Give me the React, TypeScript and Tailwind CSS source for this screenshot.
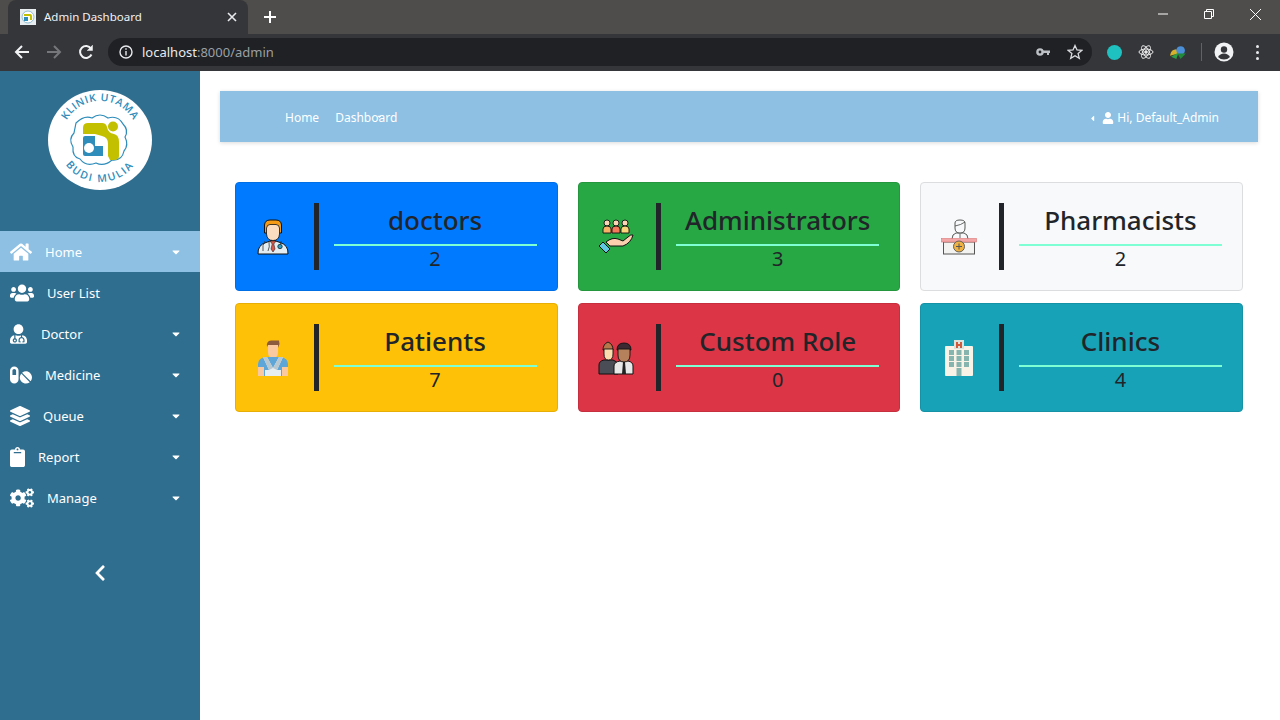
import { FaHome, FaUsers, FaUserMd, FaPills, FaLayerGroup, FaClipboard, FaCogs, FaChevronLeft, FaUser, FaCaretDown, FaCaretLeft } from "react-icons/fa";
import type { ReactNode } from "react";

const FONT = "font-['Noto_Sans','Open_Sans',sans-serif]";

// Sidebar logo, text stays real text on a curve
const Logo = () => (
  <svg width="104" height="100" viewBox="0 0 104 100">
    <ellipse cx="52" cy="50" rx="52" ry="50" fill="#ffffff" />
    <defs>
      <path id="logoTop" d="M 14 48 A 38 37 0 0 1 90 48" />
      <path id="logoBottom" d="M 12 56 A 40 36 0 0 0 92 56" />
    </defs>
    <text fontSize="10.5" fontWeight="600" fill="#2e8dbb" letterSpacing="0.6" fontFamily="Open Sans">
      <textPath href="#logoTop" startOffset="50%" textAnchor="middle">KLINIK UTAMA</textPath>
    </text>
    <text fontSize="10.5" fontWeight="600" fill="#2e8dbb" letterSpacing="1.8" fontFamily="Open Sans">
      <textPath href="#logoBottom" startOffset="50%" textAnchor="middle">BUDI MULIA</textPath>
    </text>
    <path d="M28 33 Q36 25 44 28 Q52 22 60 28 Q70 25 75 34 Q81 40 77 47 Q81 55 76 61 Q74 71 64 70 Q56 77 48 73 Q38 77 32 69 Q24 67 25 57 Q20 49 26 43 Z" fill="#ffffff" stroke="#2e8dbb" strokeWidth="1.2" />
    <path d="M35 38 Q35 33 40 33 H54 Q58 33 59 37 Q60 43 66 44 Q71 45 71 52 V66 Q71 70 66 70 H62 L60 66 V54 Q60 47 54 46 L47 44 H35 Z" fill="#c3c000" />
    <circle cx="65" cy="36.5" r="5" fill="#c3c000" />
    <path d="M35 48 Q35 46 37 46 H47 V56 H55 V66 H37 Q35 66 35 64 Z" fill="#2e8dbb" />
    <circle cx="41" cy="58" r="5" fill="#ffffff" />
  </svg>
);

const DoctorIcon = () => (
  <svg width="32" height="36" viewBox="0 0 32 36">
    <path d="M1 35 Q0.5 26 9 23.5 L16 21 L23 23.5 Q31.5 26 31 35 Z" fill="#e3edf2" stroke="#111" strokeWidth="1" />
    <path d="M13 22 H19 L16.8 25 L18 30 L16 33 L14 30 L15.2 25 Z" fill="#d9584a" stroke="#111" strokeWidth="0.5" />
    <path d="M7.5 14 V6 Q8 1 13 1 H19 Q24 1 24.5 6 V14 Z" fill="#f59a16" stroke="#111" strokeWidth="1" />
    <path d="M9.5 9 Q10 5.5 13 5.5 H19 Q22 5.5 22.5 9 V15 Q22 21.5 16 21.5 Q10 21.5 9.5 15 Z" fill="#fcdcc0" stroke="#111" strokeWidth="0.8" />
    <circle cx="23" cy="27.5" r="2.2" fill="#2f9bc0" stroke="#111" strokeWidth="0.7" />
    <path d="M8 22 Q5 26 6 32 M12 23 Q13 28 11 32 M24 22 Q25 24 23 25" stroke="#333" strokeWidth="0.8" fill="none" />
  </svg>
);

const AdminIcon = () => (
  <svg width="36" height="36" viewBox="0 0 36 36">
    {[9, 18, 27].map((x, i) => (
      <g key={x}>
        <circle cx={x} cy="4" r="3" fill="#fcd5b4" stroke="#111" strokeWidth="0.9" />
        <path d={`M${x - 4} 14 V10 Q${x - 4} 7 ${x} 7 Q${x + 4} 7 ${x + 4} 10 V14 Z`} fill={["#f7b267", "#f5785a", "#fbd67a"][i]} stroke="#111" strokeWidth="0.9" />
      </g>
    ))}
    <path d="M8 23 Q14 18 20 20 L25 22 L30 18 Q33 15 35 16 Q33 24 25 27 H12 Z" fill="#fcd0ae" stroke="#111" strokeWidth="1" />
    <path d="M5 23 L12 30 L8 34 L1 27 Z" fill="#5ec8e0" stroke="#111" strokeWidth="1" />
  </svg>
);

const PharmacistIcon = () => (
  <svg width="36" height="36" viewBox="0 0 36 36">
    <path d="M11 20 Q11 15 15 14 H23 Q27 15 27 20" fill="#f8f9fa" stroke="#444" strokeWidth="0.9" />
    <path d="M14 9 V4 Q14 1 19 1 Q24 1 24 4 V9 Q24 14 19 14 Q14 14 14 9 Z" fill="#f8f9fa" stroke="#444" strokeWidth="0.9" />
    <path d="M14 7 Q20 6 24 3" fill="none" stroke="#444" strokeWidth="0.8" />
    <path d="M19 15 V19" stroke="#444" strokeWidth="0.8" />
    <rect x="2.5" y="23" width="31" height="12" fill="#f3f3f1" stroke="#555" strokeWidth="1" />
    <rect x="0.5" y="19.5" width="35" height="3.5" fill="#f3a6a6" stroke="#d77" strokeWidth="0.6" />
    <circle cx="18" cy="27.5" r="5.5" fill="#eeb142" stroke="#555" strokeWidth="0.9" />
    <path d="M18 24.5 V30.5 M15 27.5 H21" stroke="#555" strokeWidth="1" />
  </svg>
);

const PatientIcon = () => (
  <svg width="30" height="36" viewBox="0 0 30 36">
    <path d="M9 7 Q8 1 13 0.5 H21 L21.5 4 L20 8 L18 5 H10 Z" fill="#8c5a3c" />
    <path d="M10 5 H20 V12 Q20 18 15 18 Q10 18 10 12 Z" fill="#fbc9a0" />
    <path d="M0 36 V24 Q0 18 8 17 H22 Q30 18 30 24 V36 Z" fill="#5fa6d8" />
    <path d="M0 27 H6 V36 H0 Z M24 27 H30 V36 H24 Z" fill="#fbc9a0" />
    <path d="M9 17 L15 28 L21 17 H25 L19 30 H23 V36 H7 V30 H11 L5 17 Z" fill="#e6eef2" />
    <path d="M5 17 L9 17 L15 28 L11 30 Z M25 17 L21 17 L15 28 L19 30 Z" fill="#b9c7cf" />
  </svg>
);

const RoleIcon = () => (
  <svg width="36" height="34" viewBox="0 0 36 34">
    <path d="M1 33 V24 Q1 20 6 19 H15 Q19 20 20 24 V33 Z" fill="#4a4d55" stroke="#111" strokeWidth="1" />
    <path d="M16 33 V25 Q16 21 22 20 H30 Q35 21 35 25 V33 Z" fill="#e8e8e8" stroke="#111" strokeWidth="1" />
    <path d="M25 21 H27 L28 33 H24 Z" fill="#222" />
    <path d="M5 9 Q5 3 10 1 Q15 3 15 9 Z" fill="#b5784a" stroke="#111" strokeWidth="0.9" />
    <path d="M6 8 H15 V13 Q15 19 10.5 19 Q6 19 6 13 Z" fill="#fbdcae" stroke="#111" strokeWidth="0.9" />
    <path d="M19 9 Q19 2 26 2 Q33 2 33 9 Z" fill="#3c2a33" stroke="#111" strokeWidth="0.9" />
    <path d="M20 8 H32 V14 Q32 21 26 21 Q20 21 20 14 Z" fill="#b5805c" stroke="#111" strokeWidth="0.9" />
  </svg>
);

const ClinicIcon = () => (
  <svg width="30" height="36" viewBox="0 0 30 36">
    <rect x="1" y="6" width="28" height="30" rx="1" fill="#f8f2e7" />
    <rect x="10" y="0" width="10" height="9" fill="#dbe3de" />
    <path d="M12 2 H14 V4 H16 V2 H18 V8 H16 V6 H14 V8 H12 Z" fill="#cf5a3c" />
    {[10, 16, 22].flatMap((y) => [5, 12.5, 20].map((x) => <rect key={`${x}-${y}`} x={x} y={y} width="5" height="5" fill="#86b5b0" />))}
    <rect x="12.5" y="28" width="5" height="8" fill="#86b5b0" />
  </svg>
);

const menuItems = [
  { label: "Home", icon: <FaHome size={22} />, gap: "mr-[13px]", caret: true, active: true },
  { label: "User List", icon: <FaUsers size={24} />, gap: "mr-[13px]", caret: false, active: false },
  { label: "Doctor", icon: <FaUserMd size={17} className="h-[20px]" />, gap: "mr-[14px]", caret: true, active: false },
  { label: "Medicine", icon: <FaPills size={22} />, gap: "mr-[13px]", caret: true, active: false },
  { label: "Queue", icon: <FaLayerGroup size={20} />, gap: "mr-[13px]", caret: true, active: false },
  { label: "Report", icon: <FaClipboard size={15} className="h-[20px]" />, gap: "mr-[13px]", caret: true, active: false },
  { label: "Manage", icon: <FaCogs size={24} />, gap: "mr-[13px]", caret: true, active: false },
];

const stats: { title: string; count: number; icon: ReactNode; card: string }[] = [
  { title: "doctors", count: 2, icon: <DoctorIcon />, card: "bg-[#007bff] border-[#006fe6]" },
  { title: "Administrators", count: 3, icon: <AdminIcon />, card: "bg-[#28a745] border-[#24963e]" },
  { title: "Pharmacists", count: 2, icon: <PharmacistIcon />, card: "bg-[#f8f9fa] border-[#dcdddf]" },
  { title: "Patients", count: 7, icon: <PatientIcon />, card: "bg-[#ffc107] border-[#e6ae06]" },
  { title: "Custom Role", count: 0, icon: <RoleIcon />, card: "bg-[#dc3545] border-[#c6303e]" },
  { title: "Clinics", count: 4, icon: <ClinicIcon />, card: "bg-[#17a2b8] border-[#1592a6]" },
];

const BrowserChrome = () => (
  <div className="h-[71px] shrink-0 bg-[#35363a] text-white">
    {/* tab strip */}
    <div className="h-[34px] bg-[#4f4d4b] flex items-end">
      <div className="ml-2 w-[240px] h-[34px] bg-[#35363a] rounded-t-lg flex items-center pl-3 pr-[11px]">
        <svg width="16" height="16" viewBox="0 0 16 16" className="mr-2">
          <rect width="16" height="16" fill="#e8eef0" />
          <circle cx="8" cy="8" r="6" fill="#ffffff" stroke="#8fbcd0" strokeWidth="1" />
          <path d="M4 5 H10 Q12 5 12 7 V11 H10 V7 H4 Z" fill="#c3c000" />
          <rect x="4" y="8" width="4" height="4" fill="#2e8dbb" />
        </svg>
        <span className="text-[11.5px] text-[#f1f3f4] flex-1">Admin Dashboard</span>
        <svg width="10" height="10" viewBox="0 0 10 10" stroke="#e8eaed" strokeWidth="1.6"><path d="M1 1 L9 9 M9 1 L1 9" /></svg>
      </div>
      <div className="ml-[15px] h-[34px] flex items-center">
        <svg width="14" height="14" viewBox="0 0 14 14" stroke="#ffffff" strokeWidth="2"><path d="M7 1 V13 M1 7 H13" /></svg>
      </div>
      <div className="flex-1" />
      <div className="h-[34px] flex items-center pb-[6px]">
        <svg width="12" height="12" viewBox="0 0 12 12" stroke="#ffffff" strokeWidth="1" className="mr-[34px]"><path d="M1 6 H11" /></svg>
        <svg width="12" height="12" viewBox="0 0 12 12" stroke="#ffffff" strokeWidth="1" fill="none" className="mr-[34px]"><path d="M1.5 3.5 H8.5 V10.5 H1.5 Z M3.5 3.5 V1.5 H10.5 V8.5 H8.5" /></svg>
        <svg width="13" height="13" viewBox="0 0 13 13" stroke="#ffffff" strokeWidth="1" className="mr-[18px]"><path d="M1 1 L12 12 M12 1 L1 12" /></svg>
      </div>
    </div>
    {/* toolbar */}
    <div className="h-[36px] flex items-center pl-[14px]">
      <svg width="16" height="16" viewBox="0 0 16 16" fill="none" stroke="#f1f3f4" strokeWidth="2" className="mr-4"><path d="M15 8 H2 M8 2 L2 8 L8 14" /></svg>
      <svg width="16" height="16" viewBox="0 0 16 16" fill="none" stroke="#75777b" strokeWidth="2" className="mr-4"><path d="M1 8 H14 M8 2 L14 8 L8 14" /></svg>
      <svg width="16" height="16" viewBox="0 0 16 16" fill="none" stroke="#f1f3f4" strokeWidth="2" className="mr-[14px]"><path d="M13.5 10.5 A6 6 0 1 1 13 4.5" /><path d="M14.5 1 V6.5 H9" fill="#f1f3f4" strokeWidth="0.5" /></svg>
      <div className="w-[984px] h-[28px] rounded-full bg-[#202124] flex items-center pl-[11px] pr-[9px]">
        <svg width="14" height="14" viewBox="0 0 14 14" fill="none" stroke="#e8eaed" strokeWidth="1.4" className="mr-[9px]"><circle cx="7" cy="7" r="6" /><path d="M7 6 V10.5 M7 3.3 V4.8" /></svg>
        <span className="text-[13px] text-[#e8eaed] pt-[2px]">localhost</span>
        <span className="text-[13px] text-[#9aa0a6] pt-[2px]">:8000/admin</span>
        <div className="flex-1" />
        <svg width="14" height="8" viewBox="0 0 14 8" className="mr-[17px]" fill="#bdc1c6"><circle cx="4" cy="4" r="3.8" /><rect x="6" y="2.5" width="8" height="2.5" /><rect x="11" y="4" width="2" height="3" /><circle cx="4" cy="4" r="1.4" fill="#202124" /></svg>
        <svg width="16" height="16" viewBox="0 0 16 16" fill="none" stroke="#dadce0" strokeWidth="1.3"><path d="M8 1.5 L10 6 L14.8 6.4 L11.1 9.6 L12.3 14.4 L8 11.8 L3.7 14.4 L4.9 9.6 L1.2 6.4 L6 6 Z" /></svg>
      </div>
      <div className="w-[15px] h-[15px] rounded-full bg-[#1fc0c0] ml-[15px] mr-[16px]" />
      <svg width="16" height="16" viewBox="-8 -8 16 16" fill="none" stroke="#e8e8e8" strokeWidth="1" className="mr-[16px]">
        <ellipse rx="7" ry="3" /><ellipse rx="7" ry="3" transform="rotate(60)" /><ellipse rx="7" ry="3" transform="rotate(120)" /><circle r="1.3" fill="#e8e8e8" />
      </svg>
      <svg width="17" height="15" viewBox="0 0 16 14" className="mr-[14px]">
        <path d="M0 10 Q1 4 6 4 L8 8 Z" fill="#d8b12a" /><path d="M1 11 L8 7 L6 13 Z" fill="#2f9e44" /><circle cx="10" cy="5" r="4" fill="#4a8fd8" /><path d="M7 8 L15 8 L10 13 Z" fill="#1f8a3a" />
      </svg>
      <div className="w-px h-[18px] bg-[#5f6368] mr-[12px]" />
      <svg width="20" height="20" viewBox="0 0 20 20" className="mr-[22px]"><circle cx="10" cy="10" r="9.5" fill="#f1f3f4" /><circle cx="10" cy="7.5" r="3.2" fill="#35363a" /><path d="M4 15 Q6 11.5 10 11.5 Q14 11.5 16 15 Q13.5 17.5 10 17.5 Q6.5 17.5 4 15 Z" fill="#35363a" /></svg>
      <div className="flex flex-col gap-[3px]">
        <div className="w-[3px] h-[3px] rounded-full bg-[#e8eaed]" />
        <div className="w-[3px] h-[3px] rounded-full bg-[#e8eaed]" />
        <div className="w-[3px] h-[3px] rounded-full bg-[#e8eaed]" />
      </div>
    </div>
  </div>
);

const Sidebar = () => (
  <aside className="w-[200px] shrink-0 bg-[#306e8f] text-white flex flex-col">
    <div className="h-[160px] pt-[19px] flex justify-center">
      <Logo />
    </div>
    <ul>
      {menuItems.map((item) => (
        <li key={item.label} className={`h-[41px] flex items-center pl-[10px] pr-[18px] text-[13px] ${item.active ? "bg-[#8dc0e3]" : ""}`}>
          <span className={item.gap}>{item.icon}</span>
          <span className="flex-1 pt-[2px]">{item.label}</span>
          {item.caret && <FaCaretDown size={12} />}
        </li>
      ))}
    </ul>
    <div className="mt-[46px] flex justify-center">
      <FaChevronLeft size={18} />
    </div>
  </aside>
);

const StatCard = ({ title, count, icon, card }: (typeof stats)[number]) => (
  <div className={`h-[109px] border rounded flex items-center text-[#212529] ${card}`}>
    <div className="w-[77.6px] pr-[3px] flex justify-center">{icon}</div>
    <div className="w-[5px] h-[67px] bg-[#212529]" />
    <div className="w-[203px] ml-[15px] pt-[2px] text-center">
      <div className="text-[26px] font-medium leading-[34px] h-[41px]">{title}</div>
      <div className="h-[2px] bg-[#7fffd4]" />
      <div className="text-[20px] leading-[26px]">{count}</div>
    </div>
  </div>
);

export default function App() {
  return (
    <div className={`h-screen overflow-hidden flex flex-col bg-white ${FONT}`}>
      <BrowserChrome />
      <div className="flex-1 flex min-h-0">
        <Sidebar />
        <main className="flex-1 pt-5 pl-5 pr-[22px]">
          <nav className="h-[51px] bg-[#8dc0e3] shadow-[0_1px_4px_rgba(0,0,0,0.15)] flex items-center pl-[65px] pr-[39px] pt-[3px] text-[12px] text-white">
            <span className="mr-4">Home</span>
            <span className="relative">
              Dashboard
              <FaCaretDown size={7} className="absolute left-[41px] top-[4px]" />
            </span>
            <div className="flex-1" />
            <FaCaretLeft size={9} className="mr-[5px]" />
            <FaUser size={12} className="mr-[3px]" />
            <span>Hi, Default_Admin</span>
          </nav>
          <div className="ml-[15px] mr-[15px] mt-10 grid grid-cols-3 gap-x-5 gap-y-3">
            {stats.map((stat) => (
              <StatCard key={stat.title} {...stat} />
            ))}
          </div>
        </main>
      </div>
    </div>
  );
}
